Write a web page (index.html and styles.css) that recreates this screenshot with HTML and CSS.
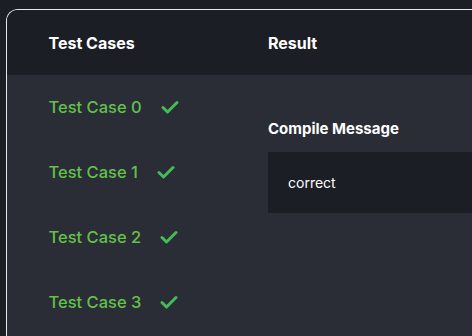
FILE: index.html
```html
<!DOCTYPE html>
<html>
<head>
<meta charset="utf-8">
<link rel="stylesheet" href="styles.css">
</head>
<body>
<div class="panel">
  <div class="head">
    <div class="col-left">Test Cases</div>
    <div class="col-right">Result</div>
  </div>
  <div class="body">
    <ul class="cases">
      <li class="case"><span>Test Case 0</span><svg class="check" viewBox="0 0 18 14"><path d="M2 7.5 L6.5 12 L16 2.5" /></svg></li>
      <li class="case"><span>Test Case 1</span><svg class="check" viewBox="0 0 18 14"><path d="M2 7.5 L6.5 12 L16 2.5" /></svg></li>
      <li class="case"><span>Test Case 2</span><svg class="check" viewBox="0 0 18 14"><path d="M2 7.5 L6.5 12 L16 2.5" /></svg></li>
      <li class="case"><span>Test Case 3</span><svg class="check" viewBox="0 0 18 14"><path d="M2 7.5 L6.5 12 L16 2.5" /></svg></li>
    </ul>
    <div class="result">
      <h3 class="label">Compile Message</h3>
      <div class="message">correct</div>
    </div>
  </div>
</div>
</body>
</html>
```
FILE: styles.css
```css
html, body {
  margin: 0;
  padding: 0;
  background: #1c1e25;
  overflow: hidden;
  width: 472px;
  height: 336px;
}
body {
  font-family: "Inter", "Liberation Sans", sans-serif;
  padding: 9px 0 0 6px;
  box-sizing: border-box;
}
.panel {
  width: 466px;
  height: 327px;
  box-sizing: border-box;
  border-top: 1.5px solid #e8e8e8;
  border-left: 1.5px solid #e8e8e8;
  border-top-left-radius: 12px;
  overflow: hidden;
  background: #2a2d35;
}
.head {
  display: flex;
  height: 64.5px;
  align-items: center;
  background: #1c1e25;
  color: #ffffff;
  font-weight: 700;
  font-size: 16px;
  padding-top: 1px;
  box-sizing: border-box;
}
.col-left {
  width: 261px;
  padding-left: 41.5px;
  box-sizing: border-box;
}
.body {
  display: flex;
}
.cases {
  list-style: none;
  margin: 0;
  padding: 0 0 0 41.5px;
  width: 261px;
  box-sizing: border-box;
}
.case {
  display: flex;
  align-items: center;
  height: 65px;
  color: #63c04b;
  font-size: 16.5px;
  font-weight: 500;
  gap: 19px;
}
.check {
  width: 18px;
  height: 14px;
  fill: none;
  stroke: #45bb58;
  stroke-width: 3;
  stroke-linecap: round;
  stroke-linejoin: round;
}
.result {
  flex: 1;
  padding-top: 45px;
}
.label {
  margin: 0 0 15px;
  color: #ffffff;
  font-size: 15px;
  line-height: 17px;
  font-weight: 700;
}
.message {
  background: #1c1e25;
  height: 61px;
  display: flex;
  align-items: center;
  padding-left: 20px;
  color: #ffffff;
  font-size: 14px;
}
```
